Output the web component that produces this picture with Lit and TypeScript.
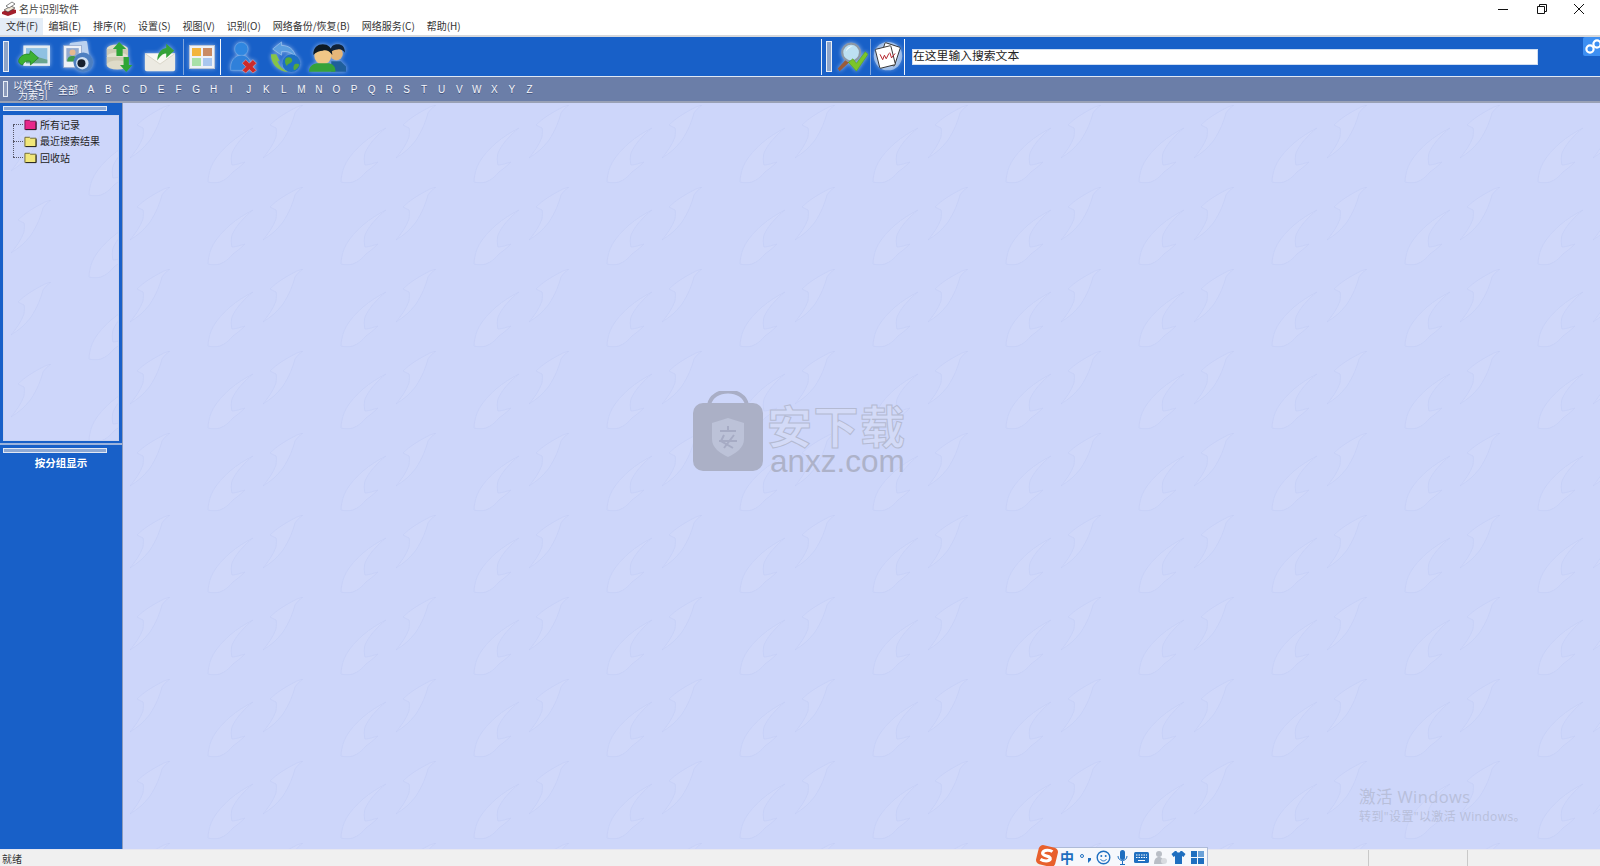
import { LitElement, html, css, svg } from 'lit';
import { customElement } from 'lit/decorators.js';

const MENUS = ['文件(F)', '编辑(E)', '排序(R)', '设置(S)', '视图(V)', '识别(O)', '网络备份/恢复(B)', '网络服务(C)', '帮助(H)'];
const LETTERS = 'ABCDEFGHIJKLMNOPQRSTUVWXYZ'.split('');

// the two embossed feather marks of the wallpaper, one of each per tile
const FEATHER = svg`
  <g filter="url(#soft)">
    <path d="M40 0C36 1 34 2 32 3 22 8 13 14 7 20l6 3c1 3 0 6 0 9-3 8-8 15-13 21 8-5 15-11 20-18 6-9 10-19 12-27 2-3 5-6 8-8Z"
      fill="#d0d8fa" stroke="#c4cef6" stroke-width=".7"/>
    <path d="M123 23c-8 4-16 9-23 15-9 8-17 17-20 27-1 4-2 8-2 12 4 1 8 1 12 0 5-2 9-5 13-10 4-3 8-6 12-10-4 1-9 3-13 3-1-4-1-8 0-12 4-9 12-18 21-25Z"
      fill="#d0d8fa" stroke="#c4cef6" stroke-width=".7"/>
  </g>`;

const icon = (body: unknown, large = false) =>
  html`<svg class="tool-icon ${large ? 'lg' : ''}" viewBox="0 0 36 36">${body}</svg>`;

const ICONS = {
  picture: svg`
    <rect x="6" y="5" width="30" height="23" fill="#e4ecf1"/>
    <rect x="9" y="8" width="24" height="17" fill="#8fc1e2"/>
    <path d="M9 25v-7c5-4 9-3 13 0l11 3v4Z" fill="#6aa58e"/>
    <path d="M1 21c2-5 7-7 12-6l1-4 9 8-9 8 0-4c-4-1-7 0-9 4-3-1-5-3-4-6Z" fill="#3cb132" stroke="#1f7d1c" stroke-width=".8"/>`,
  camera: svg`
    <rect x="11" y="1" width="20" height="24" rx="2" fill="#bcd2ef" transform="rotate(-8 20 13)"/>
    <rect x="3" y="5" width="20" height="25" fill="#eef1f7" stroke="#8aa0c8" stroke-width=".8"/>
    <rect x="6" y="8" width="14" height="15" fill="#92a9cf"/>
    <circle cx="13" cy="13" r="3.4" fill="#e5b98f"/>
    <path d="M7 23c0-5 3-6 6-6s6 1 6 6Z" fill="#3f9a4c"/>
    <circle cx="25" cy="24" r="11" fill="#4d7fc0"/>
    <circle cx="24" cy="25" r="7" fill="#cfe0f3"/>
    <circle cx="23" cy="25" r="4.5" fill="#16202e"/>`,
  sort: svg`
    <ellipse cx="15" cy="9" rx="12" ry="5" fill="#dedbc8"/>
    <rect x="3" y="9" width="24" height="8" fill="#cfcbb4"/>
    <ellipse cx="15" cy="18" rx="12" ry="5" fill="#e3e0ce"/>
    <rect x="3" y="18" width="24" height="9" fill="#cfcbb4"/>
    <ellipse cx="15" cy="27" rx="12" ry="5" fill="#dedbc8"/>
    <path d="M17 1 10 9h4v8h7V9h4Z" fill="#2fa536"/>
    <path d="M25 35l7-8h-4v-9h-6v9h-4Z" fill="#2fa536"/>`,
  mail: svg`
    <path d="M1 14h34v18a2 2 0 0 1-2 2H3a2 2 0 0 1-2-2Z" fill="#eceae2"/>
    <path d="M1 14l17 12 17-12" fill="#f9f8f3" stroke="#d6d3c6"/>
    <path d="M15 22c0-8 4-13 10-14V3l9 8-9 8v-5c-4 0-7 3-10 8Z" fill="#35a238"/>`,
  remove: svg`
    <circle cx="15" cy="9" r="7.5" fill="#2f86e0" stroke="#9cc6f0" stroke-width=".4"/>
    <path d="M3 33c-1-11 5-17 12-17 5 0 9 3 10 8l-5 9Z" fill="#2f80da" stroke="#9cc6f0" stroke-width=".4"/>
    <path d="M20 21l4 4 4-4 4 4-4 4 4 4-4 3-4-4-4 4-4-3 4-4-4-4Z" fill="#cc2a2a" stroke="#f0c5c5" stroke-width=".5"/>`,
  globe: svg`
    <path d="M13 1 3 9l10 7v-4c6-1 12 1 16 6C27 9 21 5 13 5Z" fill="#5b9ee0" stroke="#c6def6" stroke-width=".5"/>
    <path d="M1 15c0 11 8 19 19 20-6-3-10-7-12-13l3 1-4-8Z" fill="#86c447"/>
    <circle cx="24" cy="25" r="10" fill="#1d6fc4"/>
    <path d="M18 19c4-2 7 0 7 3s-5 3-6 6c-2-2-3-6-1-9ZM28 26c3-1 5 0 5 1-1 3-3 5-6 6-1-2-1-5 1-7Z" fill="#55a83c"/>`,
  users: svg`
    <circle cx="27" cy="15" r="6" fill="#e5b679"/>
    <path d="M21 14c0-6 3-8 7-8s7 2 7 8c-2-3-5-4-7-3-2 0-5 1-7 3Z" fill="#10233a"/>
    <path d="M22 22h9l5 5v5H22Z" fill="#1f5f9c"/>
    <circle cx="14" cy="17" r="8" fill="#f0c787"/>
    <path d="M5 16c0-7 4-10 9-10s9 3 9 10c-3-4-6-5-9-4-3 0-6 1-9 4Z" fill="#0d1a24"/>
    <path d="M1 32c0-5 3-7 7-8h12c4 1 6 3 6 8Z" fill="#35a23a"/>`,
  search: svg`
    <path d="M11 21 2 31l2 3 11-10Z" fill="#9a5b3a"/>
    <circle cx="17" cy="13" r="10" fill="#bde0f2" stroke="#8d98a5" stroke-width="2.4"/>
    <path d="M11 12c1-4 4-6 8-6-3 1-6 3-8 6Z" fill="#fff"/>
    <path d="M14 24l5-4 4 5 10-13 3 3-13 19Z" fill="#7cc52a" stroke="#4c9a1c" stroke-width=".6"/>`,
  cards: svg`
    <circle cx="18" cy="17" r="16" fill="#dce9f8" opacity=".55"/>
    <rect x="11" y="4" width="18" height="22" rx="1" fill="#fff" stroke="#333" transform="rotate(18 20 15)"/>
    <rect x="6" y="7" width="18" height="22" rx="1" fill="#fff" stroke="#333" transform="rotate(-14 15 18)"/>
    <path d="M9 15l3 6 2-5 2 4 3-6M20 13l2 6 4-5" fill="none" stroke="#b3232b" stroke-width="1.1"/>`,
};

@customElement('app-root')
export class AppRoot extends LitElement {
  static styles = css`
    :host {
      display: flex;
      flex-direction: column;
      width: 1600px;
      height: 866px;
      overflow: hidden;
      background: #fff;
      font: 10px "Noto Sans CJK SC", "Liberation Sans", sans-serif;
      color: #222;
    }

    .titlebar {
      display: flex;
      align-items: center;
      height: 18px;
      flex: none;
      padding-left: 1px;
    }
    .app-icon { width: 16px; height: 16px; margin-right: 2px; }
    .title { color: #444; margin-top: -1px; }
    .win-controls { margin-left: auto; display: flex; padding-right: 2px; }
    .win-controls svg { display: block; width: 38px; height: 16px; }

    .menubar {
      display: flex;
      height: 17px;
      flex: none;
      align-items: flex-start;
      border-bottom: 2px solid #d6d8dc;
      color: #333;
    }
    .menu-item { padding: 0 5.9px; line-height: 15px; height: 17px; white-space: nowrap; }
    .menu-item.active { background: #e4edf7; padding-right: 4.5px; }

    .toolbar {
      display: flex;
      align-items: center;
      flex: none;
      height: 39px;
      background: #1860c8;
      border-bottom: 1px solid #dfe8f5;
      position: relative;
    }
    .gripper {
      flex: none;
      width: 4px;
      height: 29px;
      margin: 0 3px 0 3px;
      background: #8ea5c9;
      border: 1px solid #e8eef7;
    }
    .tool {
      flex: none;
      display: flex;
      align-items: center;
      justify-content: center;
      width: 43px;
      height: 36px;
    }
    .tool.w33 { width: 33px; }
    .tool.w36 { width: 36px; }
    .tool.w38 { width: 38px; }
    .tool.w44 { width: 44px; }
    .tool.w46 { width: 46px; }
    .tool.mr4 { margin-right: 4px; }
    .tool-icon {
      flex: none;
      width: 32px;
      height: 32px;
      filter: drop-shadow(0 0 2px rgba(255, 255, 255, 0.55)) blur(0.3px);
    }
    .tool-icon.lg { width: 38px; height: 38px; }
    .thumbs {
      display: grid;
      grid-template-columns: 1fr 1fr;
      gap: 2px;
      width: 26px;
      height: 24px;
      padding: 2px;
      box-sizing: border-box;
      background: #eef1f6;
      border: 1px solid #b9c4d6;
      box-shadow: 0 0 4px rgba(255, 255, 255, 0.45);
    }
    .thumbs i:nth-child(1) { background: #f2b43c; }
    .thumbs i:nth-child(2) { background: #c98a62; }
    .thumbs i:nth-child(3) { background: #a8e0a8; }
    .thumbs i:nth-child(4) { background: #a9c6ee; }
    .sep { flex: none; width: 1px; height: 36px; background: #7fa5dc; }
    .sep.bright { background: #f2f6fc; }
    .toolbar-left { display: flex; align-items: center; width: 821px; }
    .toolbar-right { display: flex; align-items: center; flex: 1; border-left: 1px solid #e3ebf7; }
    .toolbar-right .gripper { margin: 0 2px 0 4px; }
    .search {
      width: 626px;
      height: 16px;
      margin-left: 7px;
      background: #fff;
      font-size: 11.8px;
      line-height: 10px;
      color: #222;
      box-sizing: border-box;
      border: 1px solid #d0def2;
    }
    .chip {
      position: absolute;
      right: 0;
      top: 0;
      width: 17px;
      height: 19px;
      background: #3d8ff2;
      border-radius: 2px 0 0 2px;
      overflow: hidden;
    }
    .chip svg { display: block; }

    .alphabar {
      display: flex;
      align-items: center;
      flex: none;
      height: 24px;
      background: #6b7ea8;
      border-bottom: 2px solid #99a1b5;
      color: #f4f6fb;
      text-shadow: 0 1px 0 #46557c;
    }
    .alphabar .gripper { height: 14px; width: 3px; margin: 0 4px 0 3px; background: #8b9abb; }
    .index-label {
      flex: none;
      width: 42px;
      line-height: 10px;
      text-align: center;
      white-space: nowrap;
      margin-top: 2px;
    }
    .all { flex: none; margin-left: 4px; width: 24px; }
    .letter { flex: none; width: 17.55px; text-align: center; font-family: "Liberation Sans", sans-serif; }

    .body { flex: 1; display: flex; min-height: 0; }
    .sidebar {
      flex: none;
      width: 122px;
      display: flex;
      flex-direction: column;
      background: #1860c8;
      border-right: 1px solid #8d9cbc;
    }
    .bar-grip {
      flex: none;
      width: 102px;
      height: 3px;
      margin: 3px 0 0 3px;
      background: #8ea9d4;
      border: 1px solid #e2e8f4;
    }
    .tree {
      position: relative;
      flex: none;
      width: 116px;
      height: 326px;
      margin: 4px 0 0 3px;
      box-sizing: border-box;
      border: 1px solid #c8d2ee;
      background: #cdd6fa;
      overflow: hidden;
    }
    .tree-rows { position: relative; }
    .tree-row {
      position: relative;
      display: flex;
      align-items: center;
      height: 16.5px;
      padding-left: 20px;
      gap: 3px;
    }
    .tree-row::before {
      content: '';
      position: absolute;
      left: 9px;
      top: 8px;
      width: 10px;
      border-top: 1px dotted #556;
    }
    .tree-row::after {
      content: '';
      position: absolute;
      left: 9px;
      top: -8px;
      height: 16px;
      border-left: 1px dotted #556;
    }
    .tree-row:first-child::after { display: none; }
    .tree-row svg { flex: none; width: 13px; height: 14px; }
    .divider { flex: none; height: 2px; margin-top: 2px; background: #9db4dc; }
    .group-label {
      text-align: center;
      color: #fff;
      font-size: 10.5px;
      font-weight: 700;
      margin-top: 2px;
      line-height: 16px;
    }

    .main { flex: 1; position: relative; background: #cdd6fa; overflow: hidden; }
    .tile { position: absolute; inset: 0; width: 100%; height: 100%; }

    .watermark {
      position: absolute;
      left: 569px;
      top: 288px;
      display: flex;
      gap: 3px;
    }
    .bag { width: 72px; height: 82px; display: block; }
    .wm-text { display: flex; flex-direction: column; }
    .wm-cn {
      font-size: 45px;
      line-height: 44px;
      font-weight: 700;
      letter-spacing: 1.5px;
      color: #d3daf7;
      -webkit-text-stroke: 1px #b4bad2;
      margin-top: 12px;
    }
    .wm-en {
      font: 31.5px/30px "Liberation Sans", sans-serif;
      color: #adb2c9;
      margin: -1px 0 0 3px;
    }

    .activate {
      position: absolute;
      left: 1236px;
      top: 683px;
      color: #b8bfda;
      font-family: "Open Sans", "Noto Sans CJK SC", sans-serif;
    }
    .activate div:first-child { font-size: 16.5px; line-height: 22px; letter-spacing: 0.4px; }
    .activate div:last-child { font-size: 12px; line-height: 18px; letter-spacing: 0.4px; }

    .statusbar {
      flex: none;
      display: flex;
      align-items: center;
      position: relative;
      height: 16px;
      background: #f0f0f0;
      border-top: 1px solid #e6e6f0;
      color: #333;
      padding-left: 2px;
    }
    .status-cell {
      position: absolute;
      top: 0;
      bottom: 0;
      width: 0;
      border-left: 1px solid #c9c9c9;
    }
    .status-cell.first { left: 1368px; }
    .status-cell.second { left: 1467px; }
    .ime {
      position: absolute;
      left: 1036px;
      bottom: 0;
      width: 172px;
      height: 19px;
      display: flex;
      align-items: center;
    }
    .ime-panel {
      flex: 1;
      height: 100%;
      margin-left: 13px;
      box-sizing: border-box;
      background: #f6f8fc;
      border: 1px solid #aebbd8;
      border-bottom: 0;
      display: flex;
      align-items: center;
      justify-content: space-around;
      color: #1f6fc0;
      font-size: 14px;
      font-weight: 700;
      padding-left: 8px;
    }
    .ime-panel svg { width: 15px; height: 15px; }
    .ime-logo { position: absolute; left: -1px; top: -3px; width: 24px; height: 24px; }
  `;

  private tile(id: string) {
    return html`
      <svg class="tile">
        <defs>
          <filter id="soft"><feGaussianBlur stdDeviation="0.6"></feGaussianBlur></filter>
          <pattern id=${id} width="133" height="82" patternUnits="userSpaceOnUse" x="7" y="2">
            ${FEATHER}
          </pattern>
        </defs>
        <rect width="100%" height="100%" fill="url(#${id})"></rect>
      </svg>
    `;
  }

  private folder(color: string, edge: string) {
    return html`
      <svg viewBox="0 0 14 14">
        <path d="M1 3h5l1 1h6v9H1Z" fill=${color} stroke=${edge}></path>
        <path d="M13 5v8H2" fill="none" stroke="#222"></path>
      </svg>
    `;
  }

  private renderToolbar() {
    return html`
      <div class="toolbar">
        <div class="toolbar-left">
          <div class="gripper"></div>
          <div class="tool">${icon(ICONS.picture)}</div>
          <div class="tool">${icon(ICONS.camera)}</div>
          <div class="tool">${icon(ICONS.sort)}</div>
          <div class="tool w38 mr4">${icon(ICONS.mail)}</div>
          <div class="sep"></div>
          <div class="tool w36"><div class="thumbs"><i></i><i></i><i></i><i></i></div></div>
          <div class="sep bright"></div>
          <div class="tool w46">${icon(ICONS.remove)}</div>
          <div class="tool w38">${icon(ICONS.globe)}</div>
          <div class="tool w44">${icon(ICONS.users, true)}</div>
        </div>
        <div class="toolbar-right">
          <div class="gripper"></div>
          <div class="tool w36">${icon(ICONS.search)}</div>
          <div class="sep"></div>
          <div class="tool w33">${icon(ICONS.cards)}</div>
          <div class="sep bright"></div>
          <div class="search">在这里输入搜索文本</div>
        </div>
        <div class="chip">
          <svg width="17" height="19" viewBox="0 0 17 19">
            <g fill="none" stroke="#fff" stroke-width="2.2">
              <circle cx="7" cy="12" r="3.6"></circle>
              <circle cx="14" cy="7" r="3.6"></circle>
            </g>
          </svg>
        </div>
      </div>
    `;
  }

  private renderIme() {
    return html`
      <div class="ime">
        <div class="ime-panel">
          <span>中</span>
          <svg viewBox="0 0 15 15"><circle cx="4" cy="6" r="1.5" fill="none" stroke="currentColor"></circle><path d="M10 8h3v2l-3 3Z" fill="currentColor"></path></svg>
          <svg viewBox="0 0 15 15"><circle cx="7.5" cy="7.5" r="6.3" fill="none" stroke="currentColor" stroke-width="1.4"></circle><circle cx="5.3" cy="6" r="1" fill="currentColor"></circle><circle cx="9.7" cy="6" r="1" fill="currentColor"></circle><path d="M4.5 9.2c1.5 2.3 4.5 2.3 6 0" fill="none" stroke="currentColor"></path></svg>
          <svg viewBox="0 0 15 15"><rect x="5" y="0" width="5" height="10" rx="2.5" fill="currentColor"></rect><path d="M3 6c0 6 9 6 9 0M7.500 11v3M5 14.500h5" fill="none" stroke="currentColor"></path></svg>
          <svg viewBox="0 0 15 15"><rect x="0" y="2" width="15" height="11" rx="1.500" fill="currentColor"></rect><path d="M2 5h11M2 7.500h11" stroke="#fff" stroke-dasharray="1.500 1"></path><path d="M4 10.500h7" stroke="#fff"></path></svg>
          <svg viewBox="0 0 15 15"><circle cx="6" cy="4" r="3" fill="#b9bec6"></circle><path d="M1 14c0-6 3-7 5-7s5 1 5 7Z" fill="#b9bec6"></path><circle cx="11" cy="11" r="3" fill="#d8dbe0"></circle></svg>
          <svg viewBox="0 0 15 15"><path d="M4 1 0.500 4 2.500 7 4 6v8h7V6l1.500 1 2-3L11 1H9.500c-.5 2-3.500 2-4 0Z" fill="currentColor"></path></svg>
          <svg viewBox="0 0 15 15"><rect x="1" y="1" width="6" height="6" fill="currentColor"></rect><rect x="8" y="1" width="6" height="6" fill="#6ca2d8"></rect><rect x="1" y="8" width="6" height="6" fill="currentColor"></rect><rect x="8" y="8" width="6" height="6" fill="currentColor"></rect></svg>
        </div>
        <svg class="ime-logo" viewBox="0 0 22 22">
          <rect x="2" y="2" width="18" height="18" rx="4" fill="#e8602c" transform="rotate(14 11 11)"></rect>
          <path d="M16 7c-2-1.500-8-2-9 1-1 4 8 2 7 6-1 2-6 2-9 0" fill="none" stroke="#fff" stroke-width="2.800"></path>
        </svg>
      </div>
    `;
  }

  render() {
    return html`
      <div class="titlebar">
        <svg class="app-icon" viewBox="0 0 16 16">
          <path d="M1 11l8-4 6 2v3l-8 3-6-2Z" fill="#a3202c"></path>
          <path d="M3 9l7-4 4 2-7 4Z" fill="#f1e7d8" stroke="#333" stroke-width=".6"></path>
          <path d="M5 5l6-4 3 2-6 4Z" fill="#fff" stroke="#333" stroke-width=".6"></path>
        </svg>
        <span class="title">名片识别软件</span>
        <div class="win-controls">
          <svg viewBox="0 0 38 16"><path d="M14 8.500h10" stroke="#111"></path></svg>
          <svg viewBox="0 0 38 16"><path d="M15.500 5.500h7v7h-7ZM17.500 5.500v-2h7v7h-2" fill="none" stroke="#111"></path></svg>
          <svg viewBox="0 0 38 16"><path d="M14 3l10 10M24 3 14 13" stroke="#111"></path></svg>
        </div>
      </div>
      <div class="menubar">
        ${MENUS.map((m, i) => html`<div class="menu-item ${i === 0 ? 'active' : ''}">${m}</div>`)}
      </div>
      ${this.renderToolbar()}
      <div class="alphabar">
        <div class="gripper"></div>
        <div class="index-label">以姓名作<br />为索引</div>
        <div class="all">全部</div>
        ${LETTERS.map(l => html`<div class="letter">${l}</div>`)}
      </div>
      <div class="body">
        <div class="sidebar">
          <div class="bar-grip"></div>
          <div class="tree">
            ${this.tile('tree-tile')}
            <div class="tree-rows">
              <div class="tree-row">${this.folder('#e8288a', '#7a1050')}所有记录</div>
              <div class="tree-row">${this.folder('#f1e77a', '#6b6530')}最近搜索结果</div>
              <div class="tree-row">${this.folder('#f1e77a', '#6b6530')}回收站</div>
            </div>
          </div>
          <div class="divider"></div>
          <div class="bar-grip"></div>
          <div class="group-label">按分组显示</div>
        </div>
        <div class="main">
          ${this.tile('main-tile')}
          <div class="watermark">
            <svg class="bag" viewBox="0 0 72 82">
              <path d="M17 14C20 -4 52 -4 55 14" fill="none" stroke="#a9aec6" stroke-width="4"></path>
              <rect x="1" y="12" width="70" height="68" rx="10" fill="#abb0c6"></rect>
              <path d="M20 32l16-5 16 5v16c0 9-8 14-16 18-8-4-16-9-16-18Z" fill="#bcc2d8"></path>
              <path d="M28 40h16M36 35v5M27 50h18M32 44l-3 6 12 7M42 44l-10 13" fill="none" stroke="#a6abc4" stroke-width="2"></path>
            </svg>
            <div class="wm-text">
              <div class="wm-cn">安下载</div>
              <div class="wm-en">anxz.com</div>
            </div>
          </div>
          <div class="activate">
            <div>激活 Windows</div>
            <div>转到"设置"以激活 Windows。</div>
          </div>
        </div>
      </div>
      <div class="statusbar">
        就绪
        <div class="status-cell first"></div>
        <div class="status-cell second"></div>
        ${this.renderIme()}
      </div>
    `;
  }
}

declare global {
  interface HTMLElementTagNameMap { 'app-root': AppRoot; }
}
